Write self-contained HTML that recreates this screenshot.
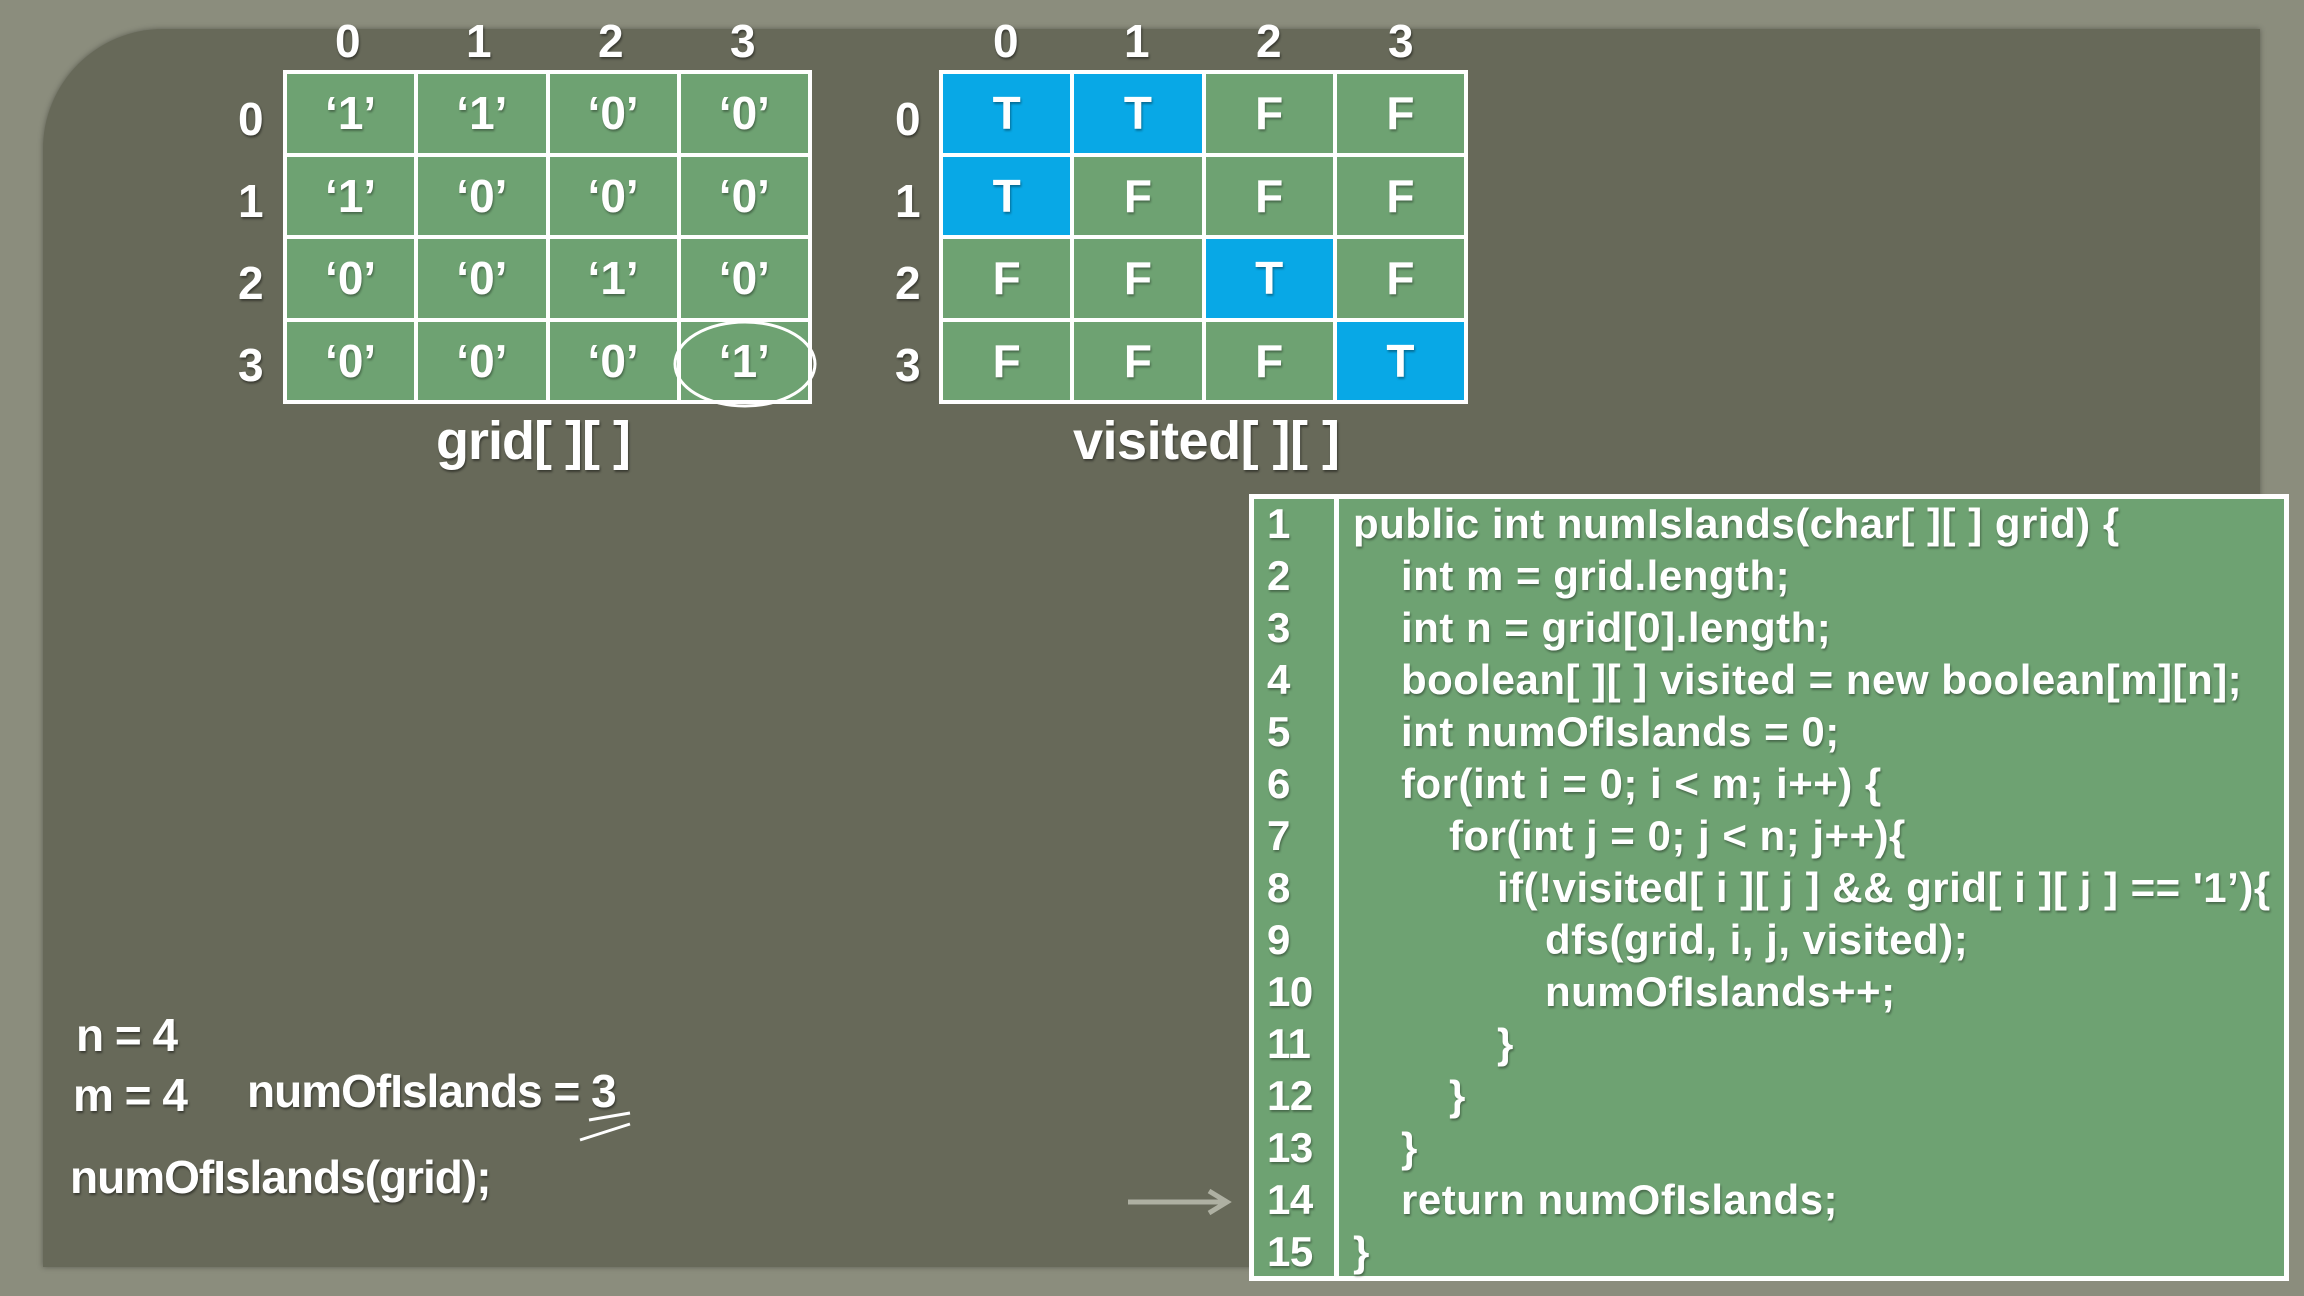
<!DOCTYPE html>
<html><head><meta charset="utf-8"><style>
body{margin:0;width:2304px;height:1296px;overflow:hidden;background:#8b8d7d;font-family:"Liberation Sans",sans-serif;color:#fff;position:relative}
.panel{position:absolute;left:43px;top:29px;width:2217px;height:1238px;background:#676959;border-top-left-radius:120px;box-shadow:0 0 6px rgba(0,0,0,.35)}
.t{position:absolute;white-space:nowrap;text-shadow:1px 2px 2px rgba(0,0,0,.45)}
.grid{position:absolute;width:529px;height:334px;background:#fff;display:grid;grid-template-columns:repeat(4,1fr);grid-template-rows:repeat(4,1fr);gap:4px;padding:4px;box-sizing:border-box}
.grid div{background:#6ea272;display:flex;align-items:center;justify-content:center;font-family:"Liberation Sans Narrow","Liberation Sans",sans-serif;font-weight:bold;font-size:46px;text-shadow:1px 2px 2px rgba(0,0,0,.35)}
.grid div.b{background:#08a8e6}
.hd{position:absolute;font-family:"Liberation Sans Narrow","Liberation Sans",sans-serif;font-weight:bold;font-size:46px;text-shadow:1px 2px 2px rgba(0,0,0,.45)}
.code{position:absolute;left:1249px;top:494px;width:1040px;height:787px;background:#6ea272;border:5px solid #fff;box-sizing:border-box}
.code .div{position:absolute;left:80px;top:0;bottom:0;width:5px;background:#fff}
.ln{position:absolute;font-size:42px;font-weight:bold;letter-spacing:0.5px;text-shadow:1px 2px 2px rgba(0,0,0,.35);white-space:nowrap}
</style></head><body>
<div class="panel"></div>

<div class="hd" style="left:335px;top:14px">0</div>
<div class="hd" style="left:466px;top:14px">1</div>
<div class="hd" style="left:598px;top:14px">2</div>
<div class="hd" style="left:730px;top:14px">3</div>
<div class="hd" style="left:238px;top:92px">0</div>
<div class="hd" style="left:238px;top:174px">1</div>
<div class="hd" style="left:238px;top:256px">2</div>
<div class="hd" style="left:238px;top:338px">3</div>
<div class="grid" style="left:283px;top:70px">
<div>‘1’</div><div>‘1’</div><div>‘0’</div><div>‘0’</div>
<div>‘1’</div><div>‘0’</div><div>‘0’</div><div>‘0’</div>
<div>‘0’</div><div>‘0’</div><div>‘1’</div><div>‘0’</div>
<div>‘0’</div><div>‘0’</div><div>‘0’</div><div>‘1’</div>
</div>
<svg style="position:absolute;left:665px;top:318px" width="170" height="100"><ellipse cx="80" cy="46" rx="70" ry="42" fill="none" stroke="#fff" stroke-width="3"/></svg>
<div class="t" style="left:436px;top:410px;font-size:54px;font-weight:bold;letter-spacing:-1px">grid[ ][ ]</div>

<div class="hd" style="left:993px;top:14px">0</div>
<div class="hd" style="left:1124px;top:14px">1</div>
<div class="hd" style="left:1256px;top:14px">2</div>
<div class="hd" style="left:1388px;top:14px">3</div>
<div class="hd" style="left:895px;top:92px">0</div>
<div class="hd" style="left:895px;top:174px">1</div>
<div class="hd" style="left:895px;top:256px">2</div>
<div class="hd" style="left:895px;top:338px">3</div>
<div class="grid" style="left:939px;top:70px">
<div class="b">T</div><div class="b">T</div><div>F</div><div>F</div>
<div class="b">T</div><div>F</div><div>F</div><div>F</div>
<div>F</div><div>F</div><div class="b">T</div><div>F</div>
<div>F</div><div>F</div><div>F</div><div class="b">T</div>
</div>
<div class="t" style="left:1073px;top:410px;font-size:54px;font-weight:bold;letter-spacing:-0.5px">visited[ ][ ]</div>

<div class="code"><div class="div"></div></div>
<div class="ln" style="left:1267px;top:498px;line-height:52px;letter-spacing:-0.5px">1<br>2<br>3<br>4<br>5<br>6<br>7<br>8<br>9<br>10<br>11<br>12<br>13<br>14<br>15</div>
<div class="ln" style="left:1353px;top:498px;line-height:52px">public int numIslands(char[ ][ ] grid) {<br>
<span style="padding-left:48px">int m = grid.length;</span><br>
<span style="padding-left:48px">int n = grid[0].length;</span><br>
<span style="padding-left:48px">boolean[ ][ ] visited = new boolean[m][n];</span><br>
<span style="padding-left:48px">int numOfIslands = 0;</span><br>
<span style="padding-left:48px">for(int i = 0; i &lt; m; i++) {</span><br>
<span style="padding-left:96px">for(int j = 0; j &lt; n; j++){</span><br>
<span style="padding-left:144px">if(!visited[ i ][ j ] &amp;&amp; grid[ i ][ j ] == '1’){</span><br>
<span style="padding-left:192px">dfs(grid, i, j, visited);</span><br>
<span style="padding-left:192px">numOfIslands++;</span><br>
<span style="padding-left:144px">}</span><br>
<span style="padding-left:96px">}</span><br>
<span style="padding-left:48px">}</span><br>
<span style="padding-left:48px">return numOfIslands;</span><br>
}</div>

<div class="t" style="left:76px;top:1008px;font-size:46px;font-weight:bold;letter-spacing:-1px">n = 4</div>
<div class="t" style="left:73px;top:1068px;font-size:46px;font-weight:bold;letter-spacing:-1px">m = 4</div>
<div class="t" style="left:247px;top:1064px;font-size:46px;font-weight:bold;letter-spacing:-1px">numOfIslands = 3</div>
<svg style="position:absolute;left:575px;top:1110px" width="60" height="35"><path d="M14 10 L55 3 M5 30 L55 14" stroke="#fff" stroke-width="3" fill="none"/></svg>
<div class="t" style="left:70px;top:1150px;font-size:46px;font-weight:bold;letter-spacing:-1px">numOfIslands(grid);</div>
<svg style="position:absolute;left:1125px;top:1185px" width="110" height="34"><path d="M3 17 H100 M84 6 L102 17 L84 28" stroke="#aeb0a2" stroke-width="5" fill="none"/></svg>
</body></html>
